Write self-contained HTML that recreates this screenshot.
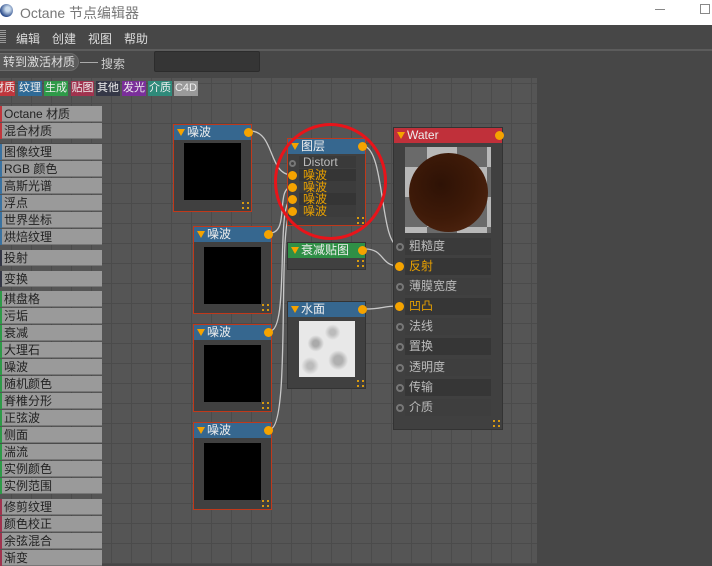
<!DOCTYPE html>
<html><head><meta charset="utf-8"><style>
*{margin:0;padding:0;box-sizing:border-box}
body{width:712px;height:564px;overflow:hidden;background:#474747;font-family:"Liberation Sans","Noto Sans CJK SC",sans-serif;font-size:12px;position:relative}
.a{position:absolute}
.title{left:0;top:0;width:712px;height:25px;background:#fff;color:#777;font-size:14px}
.menu{top:25px;left:0;width:712px;height:24px;background:#474747;color:#ddd}
.menu span{position:absolute;top:5px}
.canvas{left:0;top:78px;width:537px;height:486px;background-color:#555;background-image:linear-gradient(#4b4b4b 1px,transparent 1px),linear-gradient(90deg,#4b4b4b 1px,transparent 1px);background-size:20px 20px;background-position:0 5px,11px 0}
.tab{top:81px;height:15px;color:#eee;font-size:11px;line-height:15px;text-align:center;white-space:nowrap;overflow:hidden}
.li{left:0;width:102px;height:16px;background:#9a9a9a;color:#222;font-size:12px;line-height:16px;padding-left:4px;border-bottom:1px solid #777;white-space:nowrap}
.li:before{content:"";position:absolute;left:0;top:0;width:2px;height:16px;background:var(--c)}
.node{background:#404040;border:1px solid #c0391b}
.hd{position:absolute;left:0;top:0;right:0;height:15px;background:#36678f;color:#eee;line-height:15px;padding-left:13px;font-size:12px;white-space:nowrap}
.hd:before{content:"";position:absolute;left:3px;top:4px;border-left:4px solid transparent;border-right:4px solid transparent;border-top:7px solid #f5a300}
.out{position:absolute;right:-2px;top:3px;width:9px;height:9px;border-radius:50%;background:#f5a300}
.blk{position:absolute;background:#000}
.cr{position:absolute;width:7px;height:7px;border:2px dotted #d89a10}
.sk{position:absolute;width:8px;height:8px;border-radius:50%;border:2px solid #777}
.sko{position:absolute;width:9px;height:9px;border-radius:50%;background:#f5a300}
.row{position:absolute;height:17px;line-height:17px;color:#bbb;font-size:12px;padding-left:4px;white-space:nowrap;overflow:hidden}
</style></head><body>
<div class="a title"><div class="a" style="left:0;top:4px;width:13px;height:13px;border-radius:50%;background:radial-gradient(circle at 60% 40%,#cde 20%,#2a4a8a 70%)"></div><span class="a" style="left:20px;top:3px">Octane 节点编辑器</span><div class="a" style="left:655px;top:9px;width:10px;height:1px;background:#888"></div><div class="a" style="left:700px;top:4px;width:10px;height:10px;border:1px solid #888"></div></div>
<div class="a menu"><div class="a" style="left:0;top:5px;width:6px;height:13px;background:repeating-linear-gradient(#999 0 1px,transparent 1px 2px)"></div><span style="left:16px">编辑</span><span style="left:52px">创建</span><span style="left:88px">视图</span><span style="left:124px">帮助</span></div>
<div class="a" style="left:0;top:49px;width:712px;height:2px;background:#5c5c5c"></div>
<div class="a" style="left:0;top:51px;width:712px;height:27px;background:#474747"></div>
<div class="a" style="left:-8px;top:53px;width:87px;height:18px;border-radius:9px;background:#5a5a5a;border:1px solid #6a6a6a;color:#ddd;line-height:16px;padding-left:10px;white-space:nowrap">转到激活材质</div>
<div class="a" style="left:80px;top:62px;width:18px;height:1px;background:#aaa"></div>
<span class="a" style="left:101px;top:55px;color:#ccc">搜索</span>
<div class="a" style="left:154px;top:51px;width:106px;height:21px;background:#353535;border:1px solid #2c2c2c;border-radius:2px"></div>
<div class="a canvas"></div>
<div class="a tab" style="left:0;width:15px;background:#c0363c;text-align:right;direction:rtl">材质</div>
<div class="a tab" style="left:18px;width:24px;background:#2f6a96">纹理</div>
<div class="a tab" style="left:44px;width:24px;background:#2e9a48">生成</div>
<div class="a tab" style="left:71px;width:23px;background:#a0334e">贴图</div>
<div class="a tab" style="left:96px;width:24px;background:#343746">其他</div>
<div class="a tab" style="left:122px;width:24px;background:#7a2f9a">发光</div>
<div class="a tab" style="left:148px;width:24px;background:#2f8a7a">介质</div>
<div class="a tab" style="left:174px;width:24px;background:#9a9a9a">C4D</div>
<div class="a li" style="top:106px;--c:#c0363c">Octane 材质</div>
<div class="a li" style="top:123px;--c:#c0363c">混合材质</div>
<div class="a li" style="top:144px;--c:#3a72a0">图像纹理</div>
<div class="a li" style="top:161px;--c:#3a72a0">RGB 颜色</div>
<div class="a li" style="top:178px;--c:#3a72a0">高斯光谱</div>
<div class="a li" style="top:195px;--c:#3a72a0">浮点</div>
<div class="a li" style="top:212px;--c:#3a72a0">世界坐标</div>
<div class="a li" style="top:229px;--c:#3a72a0">烘焙纹理</div>
<div class="a li" style="top:250px;--c:#343746">投射</div>
<div class="a li" style="top:271px;--c:#343746">变换</div>
<div class="a li" style="top:291px;--c:#2e9a48">棋盘格</div>
<div class="a li" style="top:308px;--c:#2e9a48">污垢</div>
<div class="a li" style="top:325px;--c:#2e9a48">衰减</div>
<div class="a li" style="top:342px;--c:#2e9a48">大理石</div>
<div class="a li" style="top:359px;--c:#2e9a48">噪波</div>
<div class="a li" style="top:376px;--c:#2e9a48">随机颜色</div>
<div class="a li" style="top:393px;--c:#2e9a48">脊椎分形</div>
<div class="a li" style="top:410px;--c:#2e9a48">正弦波</div>
<div class="a li" style="top:427px;--c:#2e9a48">侧面</div>
<div class="a li" style="top:444px;--c:#2e9a48">湍流</div>
<div class="a li" style="top:461px;--c:#2e9a48">实例颜色</div>
<div class="a li" style="top:478px;--c:#2e9a48">实例范围</div>
<div class="a li" style="top:499px;--c:#a0334e">修剪纹理</div>
<div class="a li" style="top:516px;--c:#a0334e">颜色校正</div>
<div class="a li" style="top:533px;--c:#a0334e">余弦混合</div>
<div class="a li" style="top:550px;--c:#a0334e">渐变</div>

<svg class="a" style="left:0;top:0" width="712" height="564"><g fill="none" stroke="#c8c8c8" stroke-width="1.3">
<path d="M250 131 C275 131,268 175,292 175"/>
<path d="M270 233 C290 233,275 187,292 187"/>
<path d="M270 331 C290 331,275 199,292 199"/>
<path d="M270 429 C292 429,276 211,292 211"/>
<path d="M364 146 C385 150,380 246,399 246"/>
<path d="M365 249 C385 249,380 266,399 266"/>
<path d="M365 309 C385 309,380 306,399 306"/>
</g></svg>

<div class="a node" style="left:173px;top:124px;width:79px;height:88px"><div class="hd">噪波<div class="out"></div></div><div class="blk" style="left:10px;top:18px;width:57px;height:57px"></div><div class="cr" style="left:68px;top:77px"></div></div>
<div class="a node" style="left:193px;top:226px;width:79px;height:88px"><div class="hd">噪波<div class="out"></div></div><div class="blk" style="left:10px;top:20px;width:57px;height:57px"></div><div class="cr" style="left:68px;top:77px"></div></div>
<div class="a node" style="left:193px;top:324px;width:79px;height:88px"><div class="hd">噪波<div class="out"></div></div><div class="blk" style="left:10px;top:20px;width:57px;height:57px"></div><div class="cr" style="left:68px;top:77px"></div></div>
<div class="a node" style="left:193px;top:422px;width:79px;height:88px"><div class="hd">噪波<div class="out"></div></div><div class="blk" style="left:10px;top:20px;width:57px;height:57px"></div><div class="cr" style="left:68px;top:77px"></div></div>

<div class="a node" style="left:287px;top:138px;width:79px;height:88px"><div class="hd">图层<div class="out"></div></div>
<div class="row" style="left:11px;top:17px;width:57px;height:12px;line-height:12px;background:#3a3a3a">Distort</div>
<div class="row" style="left:11px;top:30px;width:57px;height:12px;line-height:12px;background:#353535;color:#e8a000">噪波</div>
<div class="row" style="left:11px;top:42px;width:57px;height:12px;line-height:12px;background:#3c3c3c;color:#e8a000">噪波</div>
<div class="row" style="left:11px;top:54px;width:57px;height:12px;line-height:12px;background:#353535;color:#e8a000">噪波</div>
<div class="row" style="left:11px;top:66px;width:57px;height:12px;line-height:12px;background:#3c3c3c;color:#e8a000">噪波</div>
<div class="sk" style="left:1px;top:21px;width:7px;height:7px"></div>
<div class="sko" style="left:0;top:32px"></div><div class="sko" style="left:0;top:44px"></div><div class="sko" style="left:0;top:56px"></div><div class="sko" style="left:0;top:68px"></div>
<div class="cr" style="left:69px;top:78px"></div></div>

<div class="a node" style="left:287px;top:242px;width:79px;height:28px;border-color:#333"><div class="hd" style="background:#2f8f46">衰减贴图<div class="out"></div></div><div class="cr" style="left:69px;top:17px"></div></div>
<div class="a node" style="left:287px;top:301px;width:79px;height:88px;border-color:#333"><div class="hd">水面<div class="out"></div></div><div class="blk" style="left:11px;top:19px;width:56px;height:56px;background:radial-gradient(circle at 30% 40%,#aaa 0 6%,transparent 16%),radial-gradient(circle at 70% 70%,#b0b0b0 0 8%,transparent 18%),radial-gradient(circle at 60% 20%,#bbb 0 5%,transparent 14%),radial-gradient(circle at 20% 80%,#bbb 0 5%,transparent 14%),#e8e8e8"></div><div class="cr" style="left:69px;top:78px"></div></div>

<div class="a node" style="left:393px;top:127px;width:110px;height:303px;border-color:#333"><div class="hd" style="background:#c0303a">Water<div class="out"></div></div>
<div class="a" style="left:11px;top:19px;width:86px;height:86px;background:conic-gradient(#b8b8b8 25%,#6a6a6a 0 50%,#b8b8b8 0 75%,#6a6a6a 0);background-size:60px 60px;background-position:-8px -10px"></div>
<div class="a" style="left:15px;top:25px;width:79px;height:79px;border-radius:50%;background:radial-gradient(circle at 40% 40%,#2e1206,#3e1a08 50%,#4e2410 85%,#6a3818)"></div>
<div class="row" style="left:11px;top:110px;width:86px;background:#3a3a3a">粗糙度</div>
<div class="row" style="left:11px;top:130px;width:86px;background:#363636;color:#e8a000">反射</div>
<div class="row" style="left:11px;top:150px;width:86px;background:#3e3e3e">薄膜宽度</div>
<div class="row" style="left:11px;top:170px;width:86px;background:#363636;color:#e8a000">凹凸</div>
<div class="row" style="left:11px;top:190px;width:86px;background:#3e3e3e">法线</div>
<div class="row" style="left:11px;top:210px;width:86px;background:#363636">置换</div>
<div class="row" style="left:11px;top:231px;width:86px;background:#3e3e3e">透明度</div>
<div class="row" style="left:11px;top:251px;width:86px;background:#363636">传输</div>
<div class="row" style="left:11px;top:271px;width:86px;background:#3e3e3e">介质</div>
<div class="sk" style="left:2px;top:115px"></div><div class="sko" style="left:1px;top:134px"></div><div class="sk" style="left:2px;top:155px"></div><div class="sko" style="left:1px;top:174px"></div>
<div class="sk" style="left:2px;top:195px"></div><div class="sk" style="left:2px;top:215px"></div><div class="sk" style="left:2px;top:236px"></div><div class="sk" style="left:2px;top:256px"></div><div class="sk" style="left:2px;top:276px"></div>
<div class="cr" style="left:99px;top:292px"></div></div>

<div class="a" style="left:274px;top:123px;width:113px;height:117px;border:3px solid #e8141a;border-radius:50%"></div>
</body></html>
